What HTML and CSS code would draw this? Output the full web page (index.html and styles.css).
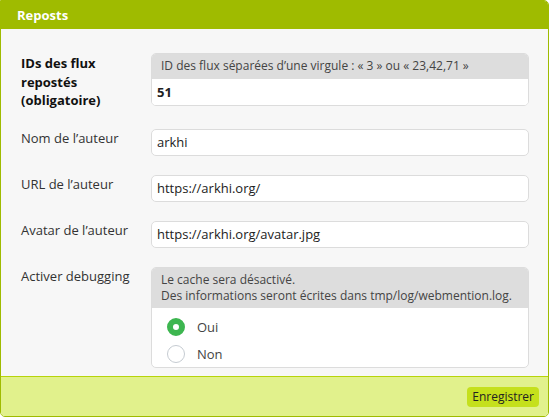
FILE: index.html
```html
<!DOCTYPE html>
<html lang="fr">
<head>
<meta charset="utf-8">
<title>Reposts</title>
<link rel="stylesheet" href="styles.css">
</head>
<body>
<div class="panel">
  <div class="panel-head">Reposts</div>
  <div class="panel-body">
    <div class="row">
      <label class="label strong">IDs des flux repostés (obligatoire)</label>
      <div class="group">
        <div class="group-hint">ID des flux séparées d’une virgule : « 3 » ou « 23,42,71 »</div>
        <div class="input bold">51</div>
      </div>
    </div>
    <div class="row">
      <label class="label">Nom de l’auteur</label>
      <div class="input boxed">arkhi</div>
    </div>
    <div class="row">
      <label class="label">URL de l’auteur</label>
      <div class="input boxed">https://arkhi.org/</div>
    </div>
    <div class="row">
      <label class="label">Avatar de l’auteur</label>
      <div class="input boxed">https://arkhi.org/avatar.jpg</div>
    </div>
    <div class="row">
      <label class="label">Activer debugging</label>
      <div class="group">
        <div class="group-hint two">Le cache sera désactivé.<br>Des informations seront écrites dans tmp/log/webmention.log.</div>
        <div class="radios">
          <div class="radio"><span class="dot on"></span>Oui</div>
          <div class="radio"><span class="dot"></span>Non</div>
        </div>
      </div>
    </div>
  </div>
  <div class="panel-foot">
    <button class="btn">Enregistrer</button>
  </div>
</div>
</body>
</html>
```
FILE: styles.css
```css
* { box-sizing: border-box; }
html, body { margin: 0; padding: 0; }
body {
  font-family: "Open Sans", "DejaVu Sans", sans-serif;
  font-size: 13px;
  color: #333;
  background: #fff;
}
.panel {
  width: 549px;
  height: 417px;
  border: 1px solid #9fbb00;
  border-radius: 0 5px 5px 5px;
  overflow: hidden;
  display: flex;
  flex-direction: column;
}
.panel-head {
  background: #9fbb00;
  color: #fff;
  font-weight: bold;
  padding: 6px 0 0 16px;
  font-size: 13px;
  margin-top: -1px;
  height: 31px;
}
.panel-body {
  background: #f7f7f7;
  padding: 24px 19px 8px 20px;
  display: flex;
  flex-direction: column;
  gap: 19px;
  flex: 1;
}
.row {
  display: flex;
  align-items: flex-start;
}
.label {
  width: 130px;
  flex: none;
  padding-top: 0;
  line-height: 18px;
  color: #333;
}
.label.strong {
  font-weight: bold;
  color: #111;
  padding-top: 1px;
  line-height: 18.5px;
}
.group {
  flex: 1;
  border: 1px solid #dcdcdc;
  border-radius: 5px;
  overflow: hidden;
  background: #fff;
}
.group-hint {
  background: #dddddd;
  font-size: 12px;
  color: #444;
  padding: 4px 10px 5px 9px;
  line-height: 16px;
  height: 25px;
}
.group-hint.two {
  height: 40px;
  padding: 4px 10px 4px 9px;
}
.input {
  height: 26px;
  line-height: 24px;
  padding: 1px 5px;
  background: #fff;
  color: #222;
}
.input.bold { font-weight: bold; }
.input.boxed {
  flex: 1;
  height: 27px;
  border: 1px solid #dcdcdc;
  border-radius: 5px;
  padding: 0 5px;
}
.radios {
  padding: 6px 0 3px 15px;
  height: 59px;
}
.radio {
  display: flex;
  align-items: center;
  height: 27px;
  color: #444;
}
.dot {
  width: 18px;
  height: 18px;
  border-radius: 50%;
  border: 1px solid #c5cbd1;
  background: #fff;
  margin-right: 12px;
  flex: none;
}
.dot.on {
  border: 6px solid #3db650;
}
.panel-foot {
  height: 42px;
  background: #e1f18c;
  border-top: 1px solid #b7d40a;
  display: flex;
  justify-content: flex-end;
  align-items: flex-start;
  padding: 10px 9px 0 0;
}
.btn {
  font-family: inherit;
  font-size: 12px;
  color: #222;
  background: #c5e01c;
  border: none;
  border-radius: 4px;
  height: 20px;
  padding: 0 5px;
  line-height: 20px;
  cursor: pointer;
}
```
